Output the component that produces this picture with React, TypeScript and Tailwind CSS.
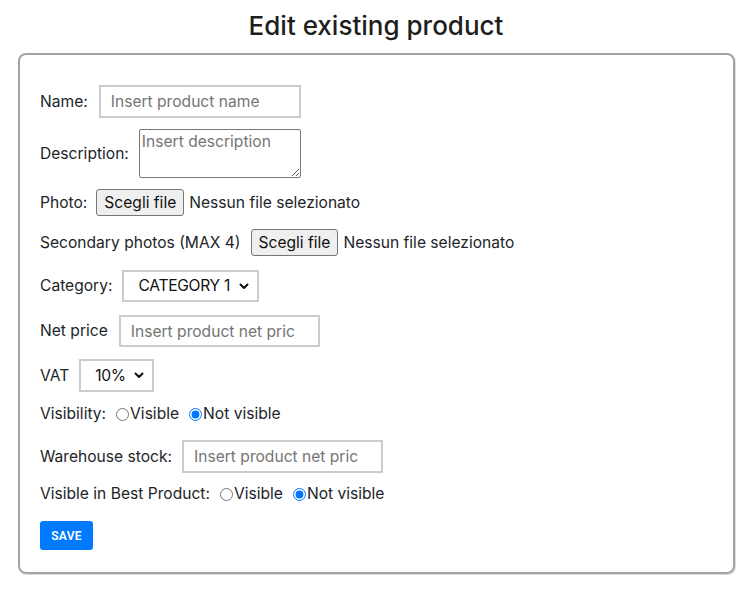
function Chevron() {
  return (
    <svg width="10" height="7" viewBox="0 0 10 7" className="shrink-0">
      <path d="M1.5 1.5 L5 5 L8.5 1.5" fill="none" stroke="#111" strokeWidth="2" strokeLinecap="round" strokeLinejoin="round" />
    </svg>
  );
}

function FakeFile() {
  return (
    <div className="flex items-center gap-[5px]">
      <button
        type="button"
        className="h-[27px] px-[7px] bg-[#efefef] border border-[#767676] rounded-[3px] text-[#111] leading-none"
      >
        Scegli file
      </button>
      <span>Nessun file selezionato</span>
    </div>
  );
}

function Select({ value, width, padL }: { value: string; width: string; padL: string }) {
  return (
    <div
      className={`flex items-center justify-between border-2 border-[#cccccc] text-[#111] pr-[8px] ${width} ${padL}`}
    >
      <span className="tracking-[-0.3px]">{value}</span>
      <Chevron />
    </div>
  );
}

function Radio({ group, checked, label }: { group: string; checked: boolean; label: string }) {
  return (
    <label className="flex items-center">
      <input type="radio" defaultChecked={checked} name={group} className="m-0 mr-px w-[13px] h-[13px]" />
      <span>{label}</span>
    </label>
  );
}

export default function App() {
  return (
    <div className="bg-white min-h-[589px] font-['Inter',sans-serif] text-[15.6px] text-[#212529] pb-[15px]">
      <h1 className="pt-[10px] text-center text-[26px] leading-[31px] font-medium text-[#1e1e1e]">
        Edit existing product
      </h1>
      <div className="mt-[12px] ml-[18px] mr-[17px] border-2 border-[#a3a3a3] rounded-[8px] shadow-[1px_1px_1px_rgba(0,0,0,0.15)] pl-[20px] pt-[30px] pb-[22px]">
        <div className="flex items-center gap-[11px] h-[33px]">
          <span>Name:</span>
          <input
            placeholder="Insert product name"
            className="w-[202px] h-[33px] border-2 border-[#cccccc] px-[10px] placeholder:text-[#757575] outline-none"
          />
        </div>

        <div className="flex items-center gap-[10px] mt-[11px]">
          <span>Description:</span>
          <textarea
            placeholder="Insert description"
            className="w-[162px] h-[49px] border border-[#767676] rounded-[2px] px-[2px] pt-[2px] leading-[19px] placeholder:text-[#757575] outline-none"
          />
        </div>

        <div className="flex items-center gap-[9px] mt-[11px]">
          <span>Photo:</span>
          <FakeFile />
        </div>

        <div className="flex items-center gap-[10px] mt-[13px]">
          <span>Secondary photos (MAX 4)</span>
          <FakeFile />
        </div>

        <div className="flex items-center gap-[10px] mt-[14px] h-[32px]">
          <span>Category:</span>
          <Select value="CATEGORY 1" width="w-[137px] h-[32px]" padL="pl-[14px]" />
        </div>

        <div className="flex items-center gap-[11px] mt-[13px]">
          <span>Net price</span>
          <input
            placeholder="Insert product net pric"
            className="w-[201px] h-[32px] border-2 border-[#cccccc] px-[10px] placeholder:text-[#757575] outline-none"
          />
        </div>

        <div className="flex items-center gap-[10px] mt-[12px]">
          <span>VAT</span>
          <Select value="10%" width="w-[75px] h-[33px]" padL="pl-[14px]" />
        </div>

        <div className="flex items-center gap-[10px] mt-[12px] h-[20px]">
          <span>Visibility:</span>
          <Radio group="visibility" checked={false} label="Visible" />
          <Radio group="visibility" checked={true} label="Not visible" />
        </div>

        <div className="flex items-center gap-[10px] mt-[16px]">
          <span>Warehouse stock:</span>
          <input
            placeholder="Insert product net pric"
            className="w-[201px] h-[33px] border-2 border-[#cccccc] px-[10px] placeholder:text-[#757575] outline-none"
          />
        </div>

        <div className="flex items-center gap-[10px] mt-[11px] h-[20px]">
          <span>Visible in Best Product:</span>
          <Radio group="best" checked={false} label="Visible" />
          <Radio group="best" checked={true} label="Not visible" />
        </div>

        <button
          type="button"
          className="mt-[17px] w-[53px] h-[29px] bg-[#007bff] rounded-[3px] text-white text-[12px] font-semibold font-['Roboto',sans-serif] tracking-[0.3px]"
        >
          SAVE
        </button>
      </div>
    </div>
  );
}
